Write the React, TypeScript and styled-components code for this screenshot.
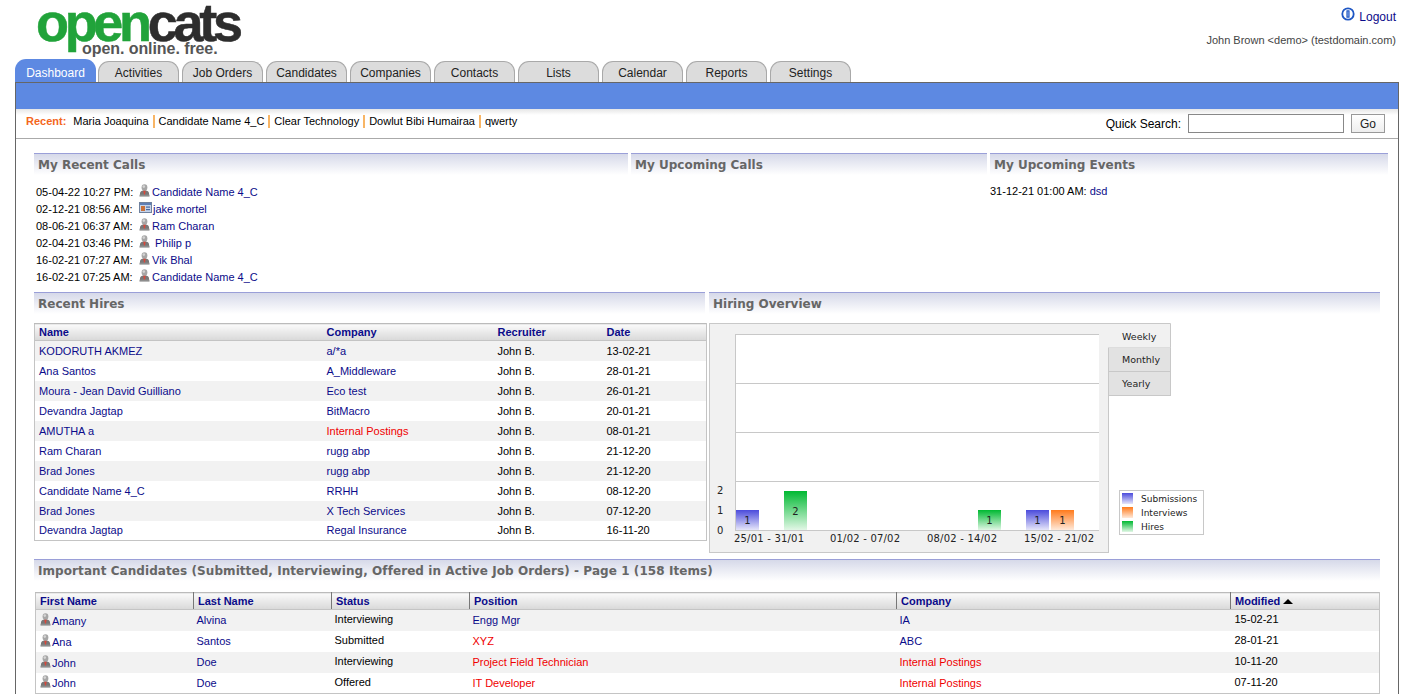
import React from "react";
import styled, { createGlobalStyle } from "styled-components";

const GlobalStyle = createGlobalStyle`
  html, body {
    margin: 0;
    padding: 0;
    height: 694px;
    overflow: hidden;
    background: #fff;
    font-family: "Liberation Sans", Arial, sans-serif;
    font-size: 11px;
    color: #000;
  }
`;

const navy = "#0b0b8a";

const tabs = ["Dashboard", "Activities", "Job Orders", "Candidates", "Companies", "Contacts", "Lists", "Calendar", "Reports", "Settings"];
const recent = ["Maria Joaquina", "Candidate Name 4_C", "Clear Technology", "Dowlut Bibi Humairaa", "qwerty"];

const calls = [
  { when: "05-04-22 10:27 PM:", name: "Candidate Name 4_C", gap: 2 },
  { when: "02-12-21 08:56 AM:", name: "jake mortel", gap: 1, card: true },
  { when: "08-06-21 06:37 AM:", name: "Ram Charan", gap: 2 },
  { when: "02-04-21 03:46 PM:", name: "Philip p", gap: 5 },
  { when: "16-02-21 07:27 AM:", name: "Vik Bhal", gap: 2 },
  { when: "16-02-21 07:25 AM:", name: "Candidate Name 4_C", gap: 2 },
];

const hires = [
  ["KODORUTH AKMEZ", "a/*a", "John B.", "13-02-21"],
  ["Ana Santos", "A_Middleware", "John B.", "28-01-21"],
  ["Moura - Jean David Guilliano", "Eco test", "John B.", "26-01-21"],
  ["Devandra Jagtap", "BitMacro", "John B.", "20-01-21"],
  ["AMUTHA a", "Internal Postings", "John B.", "08-01-21"],
  ["Ram Charan", "rugg abp", "John B.", "21-12-20"],
  ["Brad Jones", "rugg abp", "John B.", "21-12-20"],
  ["Candidate Name 4_C", "RRHH", "John B.", "08-12-20"],
  ["Brad Jones", "X Tech Services", "John B.", "07-12-20"],
  ["Devandra Jagtap", "Regal Insurance", "John B.", "16-11-20"],
];

const candidates = [
  ["Amany", "Alvina", "Interviewing", "Engg Mgr", "IA", "15-02-21", false],
  ["Ana", "Santos", "Submitted", "XYZ", "ABC", "28-01-21", true],
  ["John", "Doe", "Interviewing", "Project Field Technician", "Internal Postings", "10-11-20", true],
  ["John", "Doe", "Offered", "IT Developer", "Internal Postings", "07-11-20", true],
] as const;

const Header = styled.header`
  height: 59px;
  display: flex;
  justify-content: space-between;
  padding: 0 17px 0 36px;
`;

const Logo = styled.div`
  display: flex;
  flex-direction: column;
  width: 210px;
`;

const LogoWord = styled.div`
  font-size: 54px;
  line-height: 44px;
  height: 44px;
  font-weight: 700;
  letter-spacing: -4.3px;
  -webkit-text-stroke: 0.5px currentColor;
  white-space: nowrap;
`;

const LogoOpen = styled.span`
  color: #21a33a;
`;

const LogoCats = styled.span`
  color: #2d2d2d;
`;

const LogoTag = styled.div`
  font-size: 16px;
  line-height: 16px;
  font-weight: 700;
  color: #555;
  margin: -3px 0 0 46px;
  letter-spacing: -0.07px;
  white-space: nowrap;
`;

const UserBox = styled.div`
  display: flex;
  flex-direction: column;
  align-items: flex-end;
  padding-top: 7px;
`;

const LogoutLink = styled.a`
  display: flex;
  align-items: flex-start;
  gap: 4px;
  color: ${navy};
  font-size: 12px;
  line-height: 21px;
`;

const UserLine = styled.div`
  color: #444;
  margin-top: 5px;
  line-height: 14px;
`;

const TabRow = styled.nav`
  display: flex;
  align-items: flex-end;
  gap: 3px;
  height: 23px;
  padding-left: 15px;
`;

const Tab = styled.div<{ $active?: boolean }>`
  width: 81px;
  box-sizing: border-box;
  height: ${(p) => (p.$active ? "23px" : "21px")};
  margin-right: ${(p) => (p.$active ? "-1px" : "0")};
  border-radius: 11px 11px 0 0;
  background: ${(p) => (p.$active ? "#5d89e2" : "#dcdcdc")};
  border: ${(p) => (p.$active ? "none" : "1px solid #a9a9a9")};
  border-bottom: none;
  color: ${(p) => (p.$active ? "#fff" : "#222")};
  font-size: 12px;
  line-height: ${(p) => (p.$active ? "28px" : "22px")};
  text-align: center;
`;

const Frame = styled.main`
  margin: 0 14px 0 15px;
  border: 1px solid #666;
  border-bottom: none;
  height: 620px;
  box-sizing: border-box;
`;

const BlueBar = styled.div`
  height: 26px;
  background: #5d89e2;
`;

const RecentBar = styled.div`
  height: 30px;
  box-sizing: border-box;
  display: flex;
  justify-content: space-between;
  padding: 5px 13px 0 10px;
  background: linear-gradient(#e6e6e6 0, #fff 6px);
  border-bottom: 1px solid #aaa;
`;

const RecentList = styled.div`
  display: flex;
  align-items: center;
  height: 14px;
  white-space: nowrap;
`;

const RecentLabel = styled.strong`
  color: #f4661c;
  margin-right: 1px;
`;

const RecentItem = styled.span<{ $first?: boolean }>`
  padding: 0 4px;
  border-left: ${(p) => (p.$first ? "2px solid transparent" : "2px solid #f8b565")};
  line-height: 13px;
`;

const SearchForm = styled.form`
  display: flex;
  align-items: flex-start;
  margin: 0;
`;

const SearchLabel = styled.label`
  font-size: 12px;
  line-height: 20px;
  margin-right: 7px;
`;

const SearchInput = styled.input`
  width: 156px;
  height: 19px;
  box-sizing: border-box;
  border: 1px solid #888;
  margin: 0 7px 0 0;
  padding: 0;
  background: #fff;
`;

const GoButton = styled.button`
  width: 34px;
  height: 19px;
  box-sizing: border-box;
  border: 1px solid #999;
  background: linear-gradient(#fff, #eee);
  font-family: inherit;
  font-size: 12px;
  color: #222;
  padding: 0;
`;

const Row = styled.div<{ $gap: number; $height: number; $top: number }>`
  display: flex;
  gap: ${(p) => p.$gap}px;
  height: ${(p) => p.$height}px;
  margin-top: ${(p) => p.$top}px;
  padding-left: 18px;
`;

const Column = styled.section<{ $width: number }>`
  width: ${(p) => p.$width}px;
  flex: none;
`;

const SectionTitle = styled.h2<{ $wide?: boolean }>`
  margin: 0;
  height: 24px;
  box-sizing: border-box;
  border-top: 1px solid #9a9fd8;
  background: linear-gradient(#d6d9e9, #fff 21px);
  padding: 4px 0 0 4px;
  font-family: "DejaVu Sans", Verdana, sans-serif;
  font-size: 12px;
  line-height: 15px;
  font-weight: 700;
  letter-spacing: ${(p) => (p.$wide ? "0.07px" : "0")};
  color: #666;
  white-space: nowrap;
`;

const CallList = styled.div<{ $left?: number; $top?: number }>`
  padding: ${(p) => p.$top ?? 6}px 0 0 ${(p) => p.$left ?? 2}px;
`;

const CallRow = styled.div`
  display: flex;
  align-items: center;
  height: 17px;
  white-space: nowrap;
`;

const CallTime = styled.span`
  width: 103px;
  flex: none;
`;

const Link = styled.a<{ $hot?: boolean }>`
  color: ${(p) => (p.$hot ? "#f00000" : navy)};
`;

const IconLink = styled(Link)<{ $gap: number }>`
  margin-left: ${(p) => p.$gap}px;
`;

const IconSvg = styled.svg<{ $lift?: number }>`
  flex: none;
  display: inline-block;
  margin-top: ${(p) => p.$lift ?? 0}px;
`;

const DataTable = styled.table<{ $left?: number; $width: number }>`
  border-collapse: collapse;
  table-layout: fixed;
  width: ${(p) => p.$width}px;
  margin-left: ${(p) => p.$left ?? 0}px;
  border: 1px solid #c4c4c4;
  border-top-color: #bbb;
`;

const HeadCell = styled.th<{ $divided?: boolean }>`
  height: 16px;
  padding: 0 0 0 4px;
  text-align: left;
  color: ${navy};
  font-size: 11px;
  font-weight: 700;
  background: linear-gradient(#fafafa, #d8d8d8);
  border-bottom: 1px solid #c4c4c4;
  border-left: ${(p) => (p.$divided ? "1px solid #777" : "none")};
`;

const SortArrow = styled.span`
  display: inline-block;
  width: 0;
  height: 0;
  margin-left: 3px;
  border-left: 5px solid transparent;
  border-right: 5px solid transparent;
  border-bottom: 5px solid #000;
  vertical-align: 1px;
`;

const BodyRow = styled.tr<{ $height: number }>`
  height: ${(p) => p.$height}px;
  &:nth-child(odd) {
    background: #f2f2f2;
  }
`;

const BodyCell = styled.td<{ $pad?: number; $lift?: boolean }>`
  padding: 0 0 ${(p) => (p.$lift ? "2px" : "0")} ${(p) => p.$pad ?? 4}px;
  white-space: nowrap;
  overflow: hidden;
`;

const PersonCell = styled.span`
  display: inline-flex;
  align-items: flex-start;
  gap: 1px;
`;

const PersonName = styled(Link)`
  margin-top: 2px;
`;

const Person = ({ lift }: { lift?: number }) => (
  <IconSvg $lift={lift} width="11" height="13" viewBox="0 0 11 13">
    <ellipse cx="5.5" cy="3.4" rx="2.9" ry="3.2" fill="#a6a6a6" />
    <ellipse cx="4.8" cy="2.6" rx="1.3" ry="1.4" fill="#d4d4d4" />
    <path d="M1 11 V8.6 Q1.6 7 4 6.6 H7 Q9.4 7 10 8.6 V11 Z" fill="#777" />
    <path d="M4.3 6.8 H6.7 L5.9 11 H5.1 Z" fill="#d9483b" />
    <rect x="0.5" y="10.6" width="10" height="2" fill="#8d8d8d" />
  </IconSvg>
);

const Card = () => (
  <IconSvg $lift={-2} width="13" height="11" viewBox="0 0 13 11">
    <rect x="0.5" y="0.5" width="12" height="10" fill="#c6d4ea" stroke="#6f819e" />
    <rect x="1" y="1" width="11" height="2" fill="#5f7fb5" />
    <rect x="2" y="4" width="4" height="5" fill="#c8703a" />
    <rect x="7" y="4.5" width="4" height="1.2" fill="#4a6a9f" />
    <rect x="7" y="7" width="4" height="1.2" fill="#4a6a9f" />
  </IconSvg>
);

const LogoutIcon = () => (
  <IconSvg width="14" height="14" viewBox="0 0 14 14">
    <circle cx="7" cy="7" r="5.7" fill="#fff" stroke="#1f57c4" strokeWidth="1.8" />
    <rect x="5.4" y="3.3" width="3.2" height="7.4" rx="0.5" fill="#1f57c4" />
    <rect x="6.5" y="4.4" width="1" height="5.2" fill="#8fb0ea" />
  </IconSvg>
);

const chartText = { fontFamily: "'DejaVu Sans', Verdana, sans-serif", fontSize: 10, fill: "#222" };
const axisText = { ...chartText, letterSpacing: 0.2 };
const tabText = { ...chartText, fontSize: 9.5 };
const legendText = { ...chartText, fontSize: 9 };

const bars = [
  { x: 27, h: 20, fill: "url(#gBlue)", label: "1" },
  { x: 75, h: 39, fill: "url(#gGreen)", label: "2" },
  { x: 269, h: 20, fill: "url(#gGreen)", label: "1" },
  { x: 317, h: 20, fill: "url(#gBlue)", label: "1" },
  { x: 342, h: 20, fill: "url(#gOrange)", label: "1" },
];

const HiringChart = () => (
  <IconSvg width="496" height="231" viewBox="0 0 496 231">
    <defs>
      <linearGradient id="gBlue" x1="0" y1="0" x2="0" y2="1">
        <stop offset="0" stopColor="#4b4bdc" />
        <stop offset="1" stopColor="#e6e6fa" />
      </linearGradient>
      <linearGradient id="gGreen" x1="0" y1="0" x2="0" y2="1">
        <stop offset="0" stopColor="#00b932" />
        <stop offset="1" stopColor="#e2f7e6" />
      </linearGradient>
      <linearGradient id="gOrange" x1="0" y1="0" x2="0" y2="1">
        <stop offset="0" stopColor="#ff7a1c" />
        <stop offset="1" stopColor="#ffeadb" />
      </linearGradient>
    </defs>
    <rect x="0.5" y="0.5" width="399" height="229" fill="#f1f1f1" stroke="#c8c8c8" />
    <rect x="399.5" y="24.5" width="62" height="24" fill="#e2e2e2" stroke="#c8c8c8" />
    <rect x="399.5" y="48.5" width="62" height="24" fill="#e2e2e2" stroke="#c8c8c8" />
    <path d="M399 0.5 H461.5 V24.5 H399 Z" fill="#f1f1f1" />
    <path d="M399 0.5 H461.5 V24.5" fill="none" stroke="#c8c8c8" />
    <text x="413" y="17" {...tabText}>Weekly</text>
    <text x="413" y="40" {...tabText}>Monthly</text>
    <text x="413" y="64" {...tabText}>Yearly</text>

    <rect x="26" y="11" width="364" height="196" fill="#fff" />
    <path d="M26 11.5 H390 M26 60.5 H390 M26 109.5 H390 M26 158.5 H390 M26 207.5 H390 M26.5 11 V208" stroke="#c8c8c8" fill="none" />
    {bars.map((b) => (
      <g key={b.x}>
        <rect x={b.x} y={207 - b.h} width="23" height={b.h} fill={b.fill} />
        <text x={b.x + 11.5} y={207 - b.h / 2 + 4} textAnchor="middle" {...chartText}>{b.label}</text>
      </g>
    ))}
    <text x="8" y="171" {...chartText}>2</text>
    <text x="8" y="191" {...chartText}>1</text>
    <text x="8" y="211" {...chartText}>0</text>
    <text x="25" y="219" {...axisText}>25/01 - 31/01</text>
    <text x="121" y="219" {...axisText}>01/02 - 07/02</text>
    <text x="218" y="219" {...axisText}>08/02 - 14/02</text>
    <text x="315" y="219" {...axisText}>15/02 - 21/02</text>

    <rect x="410.5" y="167.5" width="84" height="44" fill="#fff" stroke="#c8c8c8" />
    <rect x="413" y="170" width="11" height="11" fill="url(#gBlue)" />
    <rect x="413" y="184" width="11" height="11" fill="url(#gOrange)" />
    <rect x="413" y="198" width="11" height="11" fill="url(#gGreen)" />
    <text x="432" y="179" {...legendText}>Submissions</text>
    <text x="432" y="193" {...legendText}>Interviews</text>
    <text x="432" y="207" {...legendText}>Hires</text>
  </IconSvg>
);

const TableGap = styled.div<{ $height?: number }>`
  height: ${(p) => p.$height ?? 7}px;
`;

const hireCols = [288, 171, 109, 104];
const candCols = [158, 138, 138, 427, 334, 149];

export default function App() {
  return (
    <>
      <GlobalStyle />
      <Header>
        <Logo>
          <LogoWord>
            <LogoOpen>open</LogoOpen>
            <LogoCats>cats</LogoCats>
          </LogoWord>
          <LogoTag>open. online. free.</LogoTag>
        </Logo>
        <UserBox>
          <LogoutLink>
            <LogoutIcon />
            Logout
          </LogoutLink>
          <UserLine>John Brown &lt;demo&gt; (testdomain.com)</UserLine>
        </UserBox>
      </Header>
      <TabRow>
        {tabs.map((t, i) => (
          <Tab key={t} $active={i === 0}>{t}</Tab>
        ))}
      </TabRow>
      <Frame>
        <BlueBar />
        <RecentBar>
          <RecentList>
            <RecentLabel>Recent:</RecentLabel>
            {recent.map((r, i) => (
              <RecentItem key={r} $first={i === 0}>{r}</RecentItem>
            ))}
          </RecentList>
          <SearchForm>
            <SearchLabel>Quick Search:</SearchLabel>
            <SearchInput />
            <GoButton type="button">Go</GoButton>
          </SearchForm>
        </RecentBar>

        <Row $gap={3} $height={139} $top={14}>
          <Column $width={594}>
            <SectionTitle>My Recent Calls</SectionTitle>
            <CallList>
              {calls.map((c) => (
                <CallRow key={c.when}>
                  <CallTime>{c.when}</CallTime>
                  {c.card ? <Card /> : <Person lift={-3} />}
                  <IconLink $gap={c.gap}>{c.name}</IconLink>
                </CallRow>
              ))}
            </CallList>
          </Column>
          <Column $width={356}>
            <SectionTitle>My Upcoming Calls</SectionTitle>
          </Column>
          <Column $width={398}>
            <SectionTitle>My Upcoming Events</SectionTitle>
            <CallList $left={0} $top={5}>
              <CallRow>
                31-12-21 01:00 AM:&nbsp;<Link>dsd</Link>
              </CallRow>
            </CallList>
          </Column>
        </Row>

        <Row $gap={4} $height={267} $top={0}>
          <Column $width={671}>
            <SectionTitle>Recent Hires</SectionTitle>
            <TableGap />
            <DataTable $width={672}>
              <colgroup>
                {hireCols.map((w) => (
                  <col key={w} width={w} />
                ))}
              </colgroup>
              <thead>
                <tr>
                  <HeadCell>Name</HeadCell>
                  <HeadCell>Company</HeadCell>
                  <HeadCell>Recruiter</HeadCell>
                  <HeadCell>Date</HeadCell>
                </tr>
              </thead>
              <tbody>
                {hires.map((h, i) => (
                  <BodyRow key={i} $height={20}>
                    <BodyCell><Link>{h[0]}</Link></BodyCell>
                    <BodyCell><Link $hot={h[1] === "Internal Postings"}>{h[1]}</Link></BodyCell>
                    <BodyCell>{h[2]}</BodyCell>
                    <BodyCell>{h[3]}</BodyCell>
                  </BodyRow>
                ))}
              </tbody>
            </DataTable>
          </Column>
          <Column $width={671}>
            <SectionTitle>Hiring Overview</SectionTitle>
            <TableGap />
            <HiringChart />
          </Column>
        </Row>

        <Row $gap={0} $height={140} $top={0}>
          <Column $width={1346}>
            <SectionTitle $wide>Important Candidates (Submitted, Interviewing, Offered in Active Job Orders) - Page 1 (158 Items)</SectionTitle>
            <TableGap $height={9} />
            <DataTable $left={1} $width={1344}>
              <colgroup>
                {candCols.map((w, i) => (
                  <col key={i} width={w} />
                ))}
              </colgroup>
              <thead>
                <tr>
                  <HeadCell>First Name</HeadCell>
                  <HeadCell $divided>Last Name</HeadCell>
                  <HeadCell $divided>Status</HeadCell>
                  <HeadCell $divided>Position</HeadCell>
                  <HeadCell $divided>Company</HeadCell>
                  <HeadCell $divided>Modified<SortArrow /></HeadCell>
                </tr>
              </thead>
              <tbody>
                {candidates.map((c, i) => (
                  <BodyRow key={i} $height={21}>
                    <BodyCell><PersonCell><Person /><PersonName>{c[0]}</PersonName></PersonCell></BodyCell>
                    <BodyCell $pad={3}><Link>{c[1]}</Link></BodyCell>
                    <BodyCell $pad={3} $lift>{c[2]}</BodyCell>
                    <BodyCell $pad={3}><Link $hot={c[6]}>{c[3]}</Link></BodyCell>
                    <BodyCell $pad={3}><Link $hot={c[4] === "Internal Postings"}>{c[4]}</Link></BodyCell>
                    <BodyCell $lift>{c[5]}</BodyCell>
                  </BodyRow>
                ))}
              </tbody>
            </DataTable>
          </Column>
        </Row>
      </Frame>
    </>
  );
}
